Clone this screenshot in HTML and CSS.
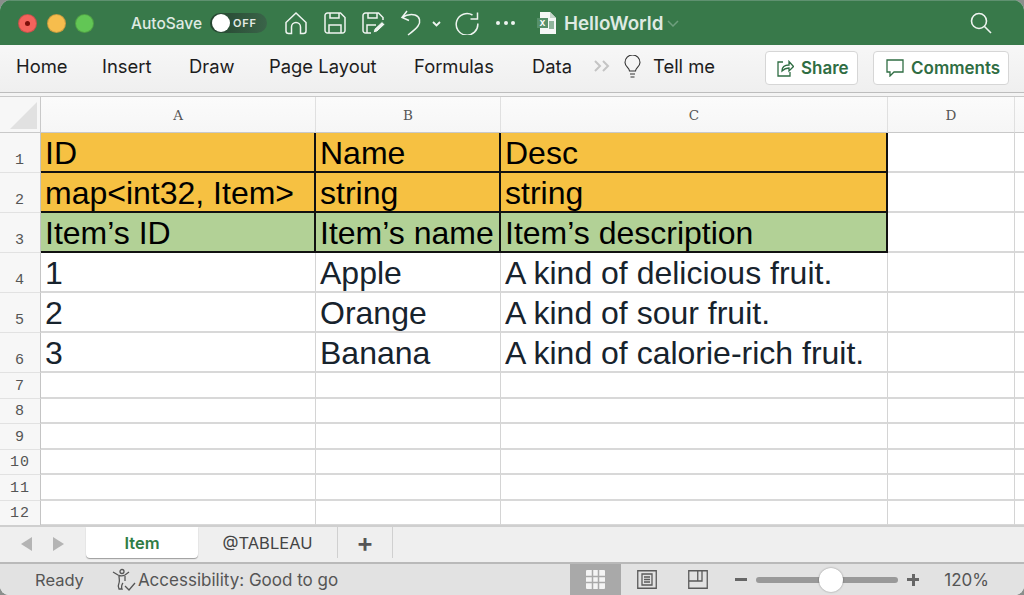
FILE: index.html
```html
<!DOCTYPE html>
<html lang="en">

<head>
    <meta charset="UTF-8">
    <title>HelloWorld</title>
    <link rel="stylesheet" href="styles.css">
</head>

<body>
    <div class="window">
        <div class="titlebar">
            <div class="lights">
                <span class="light red"><i></i></span>
                <span class="light yellow"></span>
                <span class="light green"></span>
            </div>
            <span class="autosave">AutoSave</span>
            <div class="toggle"><span class="knob"></span><span class="off">OFF</span></div>
            <svg class="tool home" width="24" height="24" viewBox="0 0 24 24"><path d="M2 11.500 12 2l10 9.500V20a2.500 2.500 0 0 1-2.500 2.500H16.500V16a4.500 4.500 0 0 0-9 0v6.500H4.500A2.500 2.500 0 0 1 2 20z"/></svg>
            <svg class="tool save" width="22" height="22" viewBox="0 0 22 22"><path d="M1 3.500A2.500 2.500 0 0 1 3.500 1h13L21 5.500v13a2.500 2.500 0 0 1-2.500 2.500h-15A2.500 2.500 0 0 1 1 18.500zM6 1v5h9V1M5 21v-8h12v8"/></svg>
            <svg class="tool saveas" width="24" height="22" viewBox="0 0 24 22"><path d="M9 21H3.500A2.500 2.500 0 0 1 1 18.500v-15A2.500 2.500 0 0 1 3.500 1h13L21 5.500V8M6 1v5h9V1M5 21v-8h9"/><path class="fill" d="M11 21l1-4 8-7.500 3 3-8 7.500z"/></svg>
            <svg class="tool undo" width="22" height="28" viewBox="0 0 22 28"><path d="M7 2 2 8.500l7 3M2 8.500c4-2.500 9-3.500 13-2.500 5 1.500 6 7 3 11-2 3-6 6-10 9"/></svg>
            <svg class="tool chev" width="9" height="6" viewBox="0 0 9 6"><path d="M1 1l3.500 3.500L8 1"/></svg>
            <svg class="tool redo" width="24" height="24" viewBox="0 0 24 24"><path d="M17.500 3.500A10.800 10.800 0 1 0 22.800 12M15.500 7.500h7v-6.500" transform="translate(0 .5)"/></svg>
            <span class="dots"><i></i><i></i><i></i></span>
            <svg class="xl" width="19" height="22" viewBox="0 0 19 22"><path class="page" d="M3 0h10l6 6v16H3z"/><path class="fold" d="M13 0l6 6h-6z"/><rect class="cells" x="12" y="9" width="5" height="8"/><rect class="badge" x="0" y="6" width="11" height="10"/><text class="badge-x" x="5.500" y="14">X</text></svg>
            <span class="doc">HelloWorld</span>
            <svg class="tool docchev" width="12" height="7" viewBox="0 0 12 7"><path d="M1 1l5 5 5-5"/></svg>
            <svg class="tool search" width="22" height="22" viewBox="0 0 22 22"><circle cx="9" cy="9" r="7.500"/><path d="M14.500 14.500 21 21"/></svg>
        </div>

        <div class="ribbon">
            <span class="tab tab-home">Home</span>
            <span class="tab tab-insert">Insert</span>
            <span class="tab tab-draw">Draw</span>
            <span class="tab tab-page">Page Layout</span>
            <span class="tab tab-formulas">Formulas</span>
            <span class="tab tab-data">Data</span>
            <svg class="more" width="17" height="12" viewBox="0 0 17 12"><path d="M1 1l5 5-5 5M9 1l5 5-5 5"/></svg>
            <svg class="bulb" width="17" height="23" viewBox="0 0 17 23"><path d="M5.500 16c0-3-4.500-4.500-4.500-8.500a7.500 7.500 0 0 1 15 0c0 4-4.500 5.500-4.500 8.500zM6 19h5M6.500 22h4"/></svg>
            <span class="tab tab-tell">Tell me</span>
            <button class="btn btn-share">
                <svg width="17" height="17" viewBox="0 0 17 17"><path d="M6 2H1v14h12v-4M5 11c0-4 3-6 7-6V1.500L16.500 6.500 12 11V8c-3 0-5 1-7 3z"/></svg>
                Share
            </button>
            <button class="btn btn-comments">
                <svg width="18" height="18" viewBox="0 0 18 18"><path d="M1 1h16v12H8l-4 4v-4H1z"/></svg>
                Comments
            </button>
        </div>

        <div class="sheet">
            <div class="corner"><span class="tri"></span></div>
            <div class="colhead">A</div>
            <div class="colhead">B</div>
            <div class="colhead">C</div>
            <div class="colhead">D</div>
            <div class="colhead last"></div>

            <div class="rowhead tall">1</div>
            <div class="cell tall head">ID</div>
            <div class="cell tall head">Name</div>
            <div class="cell tall head">Desc</div>
            <div class="cell tall"></div>
            <div class="cell tall last"></div>

            <div class="rowhead tall">2</div>
            <div class="cell tall head">map&lt;int32, Item&gt;</div>
            <div class="cell tall head">string</div>
            <div class="cell tall head">string</div>
            <div class="cell tall"></div>
            <div class="cell tall last"></div>

            <div class="rowhead tall">3</div>
            <div class="cell tall note">Item’s ID</div>
            <div class="cell tall note">Item’s name</div>
            <div class="cell tall note">Item’s description</div>
            <div class="cell tall"></div>
            <div class="cell tall last"></div>

            <div class="rowhead tall">4</div>
            <div class="cell tall">1</div>
            <div class="cell tall">Apple</div>
            <div class="cell tall">A kind of delicious fruit.</div>
            <div class="cell tall"></div>
            <div class="cell tall last"></div>

            <div class="rowhead tall">5</div>
            <div class="cell tall">2</div>
            <div class="cell tall">Orange</div>
            <div class="cell tall">A kind of sour fruit.</div>
            <div class="cell tall"></div>
            <div class="cell tall last"></div>

            <div class="rowhead tall">6</div>
            <div class="cell tall">3</div>
            <div class="cell tall">Banana</div>
            <div class="cell tall">A kind of calorie-rich fruit.</div>
            <div class="cell tall"></div>
            <div class="cell tall last"></div>

            <div class="rowhead">7</div><div class="cell"></div><div class="cell"></div><div class="cell"></div><div class="cell"></div><div class="cell last"></div>
            <div class="rowhead">8</div><div class="cell"></div><div class="cell"></div><div class="cell"></div><div class="cell"></div><div class="cell last"></div>
            <div class="rowhead">9</div><div class="cell"></div><div class="cell"></div><div class="cell"></div><div class="cell"></div><div class="cell last"></div>
            <div class="rowhead">10</div><div class="cell"></div><div class="cell"></div><div class="cell"></div><div class="cell"></div><div class="cell last"></div>
            <div class="rowhead">11</div><div class="cell"></div><div class="cell"></div><div class="cell"></div><div class="cell"></div><div class="cell last"></div>
            <div class="rowhead">12</div><div class="cell"></div><div class="cell"></div><div class="cell"></div><div class="cell"></div><div class="cell last"></div>
        </div>

        <div class="tabbar">
            <span class="arrow left"></span>
            <span class="arrow right"></span>
            <span class="sheettab active">Item</span>
            <span class="sheettab other">@TABLEAU</span>
            <span class="sheettab add">+</span>
        </div>

        <div class="status">
            <span class="ready">Ready</span>
            <svg class="a11y" width="24" height="24" viewBox="0 0 24 24"><circle cx="10" cy="3.500" r="2"/><path d="M1 4l5 3c2 1 5 1 7 0l4-3M7 8c0 3 1 4 0 7-1 2-1 4 0 6h3c-1-2 0-5 1-6M13 8v5M13 18l4 4 6-7"/></svg>
            <span class="access">Accessibility: Good to go</span>
            <div class="views">
                <span class="view on"><svg width="19" height="19" viewBox="0 0 19 19"><rect class="solid" width="19" height="19" rx="1"/><path class="grid" d="M6.500 0v19M12.500 0v19M0 6.500h19M0 12.500h19"/></svg></span>
                <span class="view"><svg width="20" height="19" viewBox="0 0 20 19"><path d="M.75.75h18.500v17.500H.75zM5 4h10v11H5zM7 7h6M7 9.500h6M7 12h6"/></svg></span>
                <span class="view"><svg width="20" height="19" viewBox="0 0 20 19"><path d="M.75.75h18.500v17.500H.75zM.75 11h9V.75M14 .75V11H9.750"/></svg></span>
            </div>
            <span class="minus"></span>
            <div class="slider"><span class="thumb"></span></div>
            <span class="plus"></span>
            <span class="percent">120%</span>
        </div>
    </div>
</body>

</html>
```
FILE: styles.css
```css
* {
    margin: 0;
    padding: 0;
    box-sizing: border-box;
}

html,
body {
    width: 1024px;
    height: 595px;
    overflow: hidden;
    background: #8a8f8c;
}

.window {
    width: 1024px;
    height: 595px;
    display: flex;
    flex-direction: column;
    border-radius: 11px 11px 9px 9px;
    overflow: hidden;
    font-family: "Inter", "Liberation Sans", sans-serif;
    background: #fff;
}

/* title bar */
.titlebar {
    height: 45px;
    flex: none;
    display: flex;
    align-items: center;
    padding-left: 18px;
    background: #38794a;
    border-top: 1px solid #5f9170;
}

.lights {
    display: flex;
    gap: 9.500px;
    width: 95px;
}

.light {
    width: 19px;
    height: 19px;
    border-radius: 50%;
    display: flex;
    align-items: center;
    justify-content: center;
    border: 1px solid rgba(0, 0, 0, .18);
}

.light i {
    width: 5px;
    height: 5px;
    border-radius: 50%;
    background: #7d0f0b;
}

.red { background: #f4635c; }
.yellow { background: #f6bd4d; }
.green { background: #62c655; }

.autosave {
    width: 79px;
    margin-left: 18px;
    font-size: 15.500px;
    font-weight: 500;
    color: #dfeae2;
    white-space: nowrap;
}

.toggle {
    width: 57px;
    height: 20px;
    border-radius: 10px;
    background: linear-gradient(90deg, #24452f, #3a6449);
    display: flex;
    align-items: center;
}

.knob {
    width: 18px;
    height: 18px;
    border-radius: 50%;
    background: #fff;
    margin-left: 2px;
}

.off {
    margin-left: 3px;
    font-size: 11px;
    font-weight: 600;
    letter-spacing: .8px;
    color: #e3ebe5;
}

.tool {
    flex: none;
    fill: none;
    stroke: #eef4f0;
    stroke-width: 1.500;
}

.home { margin-left: 17px; }
.save { margin-left: 16px; }
.saveas { margin-left: 16px; }
.undo { margin-left: 14px; }
.chev { margin-left: 10px; margin-top: 2px; stroke-width: 1.800; }
.redo { margin-left: 14px; }
.fill { fill: #eef4f0; stroke: #38794a; stroke-width: 1; }

.dots {
    display: flex;
    gap: 3.500px;
    margin-left: 17px;
}

.dots i {
    width: 4px;
    height: 4px;
    border-radius: 50%;
    background: #eef4f0;
}

.xl {
    flex: none;
    margin-left: 22px;
}

.page { fill: #f4f7f5; }
.fold { fill: #c5d5ca; }
.cells { fill: #8fb59b; }
.badge { fill: #57906a; }

.badge-x {
    font-size: 8px;
    font-weight: 700;
    fill: #fff;
    text-anchor: middle;
}

.doc {
    margin-left: 8px;
    font-size: 18.800px;
    font-weight: 600;
    color: #dfeae2;
}

.docchev {
    margin-left: 4px;
    stroke: #6f9f7e;
}

.search {
    margin-left: auto;
    margin-right: 32px;
    stroke-width: 1.600;
}

/* ribbon */
.ribbon {
    height: 47px;
    flex: none;
    display: flex;
    align-items: center;
    background: linear-gradient(#f7f7f7, #efefef);
    padding-left: 16px;
    padding-bottom: 5px;
}

.tab {
    font-size: 18.400px;
    color: #1d1d1d;
    white-space: nowrap;
}

.tab-home { width: 86px; }
.tab-insert { width: 87px; }
.tab-draw { width: 80px; }
.tab-page { width: 145px; }
.tab-formulas { width: 118px; }
.tab-data { width: 62px; }

.more {
    flex: none;
    fill: none;
    stroke: #c4c4c4;
    stroke-width: 2;
}

.bulb {
    flex: none;
    margin-left: 13px;
    fill: none;
    stroke: #333;
    stroke-width: 1.100;
}

.tab-tell { margin-left: 12px; }

.btn {
    height: 34px;
    margin-top: 4px;
    display: flex;
    align-items: center;
    gap: 7px;
    border: 1px solid #d6d6d6;
    border-radius: 4px;
    background: #fff;
    color: #2f6d43;
    font-family: inherit;
    font-size: 17px;
    font-weight: 600;
}

.btn svg {
    flex: none;
    fill: none;
    stroke: #2f6d43;
    stroke-width: 1.300;
}

.btn-share {
    width: 93px;
    margin-left: auto;
    padding-left: 11px;
}

.btn-comments {
    width: 136px;
    margin-left: 15px;
    margin-right: 15px;
    padding-left: 12px;
}

/* grid */
.sheet {
    height: 433px;
    flex: none;
    display: grid;
    grid-template-columns: 41px 275px 185px 387px 127px 9px;
    grid-template-rows: 36px repeat(6, 40px) repeat(6, 25.500px);
    border-top: 1px solid #bdbdbd;
    box-shadow: inset 0 3px 0 #f4f4f4, inset 0 4px 0 #c9c9c9;
    padding-top: 4px;
    background: #fff;
    overflow: hidden;
}

.corner {
    background: #f7f7f7;
    border-right: 1px solid #c9c9c9;
    border-bottom: 1px solid #c9c9c9;
    position: relative;
}

.tri {
    position: absolute;
    left: 10px;
    bottom: 3px;
    width: 27px;
    height: 27px;
    background: #e1e1e1;
    clip-path: polygon(100% 0, 100% 100%, 0 100%);
}

.colhead {
    display: flex;
    align-items: center;
    justify-content: center;
    background: linear-gradient(#fbfbfb, #f6f6f6);
    border-right: 1px solid #e0e0e0;
    border-bottom: 1px solid #c9c9c9;
    font-family: "DejaVu Serif", serif;
    font-size: 13.500px;
    color: #555;
}

.rowhead {
    display: flex;
    align-items: flex-end;
    justify-content: center;
    padding-bottom: 3px;
    background: #f7f7f7;
    border-right: 1px solid #c4c4c4;
    border-bottom: 1px solid #e2e2e2;
    font-family: "Liberation Mono", monospace;
    font-size: 15px;
    letter-spacing: 1px;
    color: #555;
}

.cell {
    border-right: 1px solid #d4d4d4;
    border-bottom: 2px solid #d8d8d8;
    padding-left: 4px;
    font-family: "Liberation Sans", sans-serif;
    font-size: 32px;
    color: #17232d;
    white-space: nowrap;
}

.tall {
    line-height: 40px;
}

.rowhead.tall {
    line-height: normal;
}

.last {
    border-right: 0;
}

.head,
.note {
    color: #000;
    border-right: 2px solid #111;
    border-bottom: 2px solid #111;
}

.head { background: #f6c142; }
.note { background: #b2d196; }

/* sheet tabs */
.tabbar {
    height: 37px;
    flex: none;
    display: flex;
    align-items: flex-start;
    background: #efefef;
    border-top: 2px solid #cfcfcf;
}

.arrow {
    width: 0;
    height: 0;
    margin-top: 10px;
    border-top: 7px solid transparent;
    border-bottom: 7px solid transparent;
}

.arrow.left {
    margin-left: 21px;
    border-right: 11px solid #b4b4b4;
}

.arrow.right {
    margin-left: 21px;
    border-left: 11px solid #b4b4b4;
}

.sheettab {
    height: 31px;
    display: flex;
    align-items: center;
    justify-content: center;
    font-size: 16.500px;
    white-space: nowrap;
}

.active {
    width: 112px;
    margin-left: 22px;
    background: #fff;
    border-radius: 0 0 4px 4px;
    box-shadow: 0 1px 1px rgba(0, 0, 0, .35);
    color: #2f7d45;
    font-weight: 600;
}

.other {
    width: 140px;
    color: #444;
    border-right: 1px solid #d0d0d0;
}

.add {
    width: 55px;
    color: #555;
    font-size: 26px;
    font-weight: 600;
    border-right: 1px solid #d0d0d0;
}

/* status bar */
.status {
    flex: 1;
    display: flex;
    align-items: center;
    background: #e2e2e2;
    border-top: 2px solid #b9b9b9;
    color: #555;
    font-size: 17px;
}

.ready { margin-left: 35px; font-size: 16.500px; }

.a11y {
    flex: none;
    margin-left: 28px;
    fill: none;
    stroke: #555;
    stroke-width: 1.300;
}

.access { margin-left: 2px; white-space: nowrap; }

.views {
    display: flex;
    align-self: stretch;
    margin-left: auto;
}

.view {
    width: 51px;
    display: flex;
    align-items: center;
    justify-content: center;
}

.view.on { background: #a9a9a9; }

.view svg {
    fill: none;
    stroke: #5a5a5a;
    stroke-width: 1.300;
}

.solid { fill: #f4f4f4; stroke: none; }
.view svg .grid { stroke: #a9a9a9; stroke-width: 1.500; }

.minus {
    width: 12px;
    height: 3px;
    margin-left: 12px;
    background: #666;
}

.slider {
    width: 142px;
    height: 6px;
    margin-left: 9px;
    border-radius: 3px;
    background: #999;
    position: relative;
}

.thumb {
    position: absolute;
    left: 63px;
    top: -9px;
    width: 24px;
    height: 24px;
    border-radius: 50%;
    background: #fff;
    box-shadow: 0 0 2px rgba(0, 0, 0, .4);
}

.plus {
    width: 12px;
    height: 12px;
    margin-left: 9px;
    background: linear-gradient(#666, #666) center / 12px 3px no-repeat,
        linear-gradient(#666, #666) center / 3px 12px no-repeat;
}

.percent {
    margin-left: 25px;
    margin-right: 35px;
    white-space: nowrap;
}
```
